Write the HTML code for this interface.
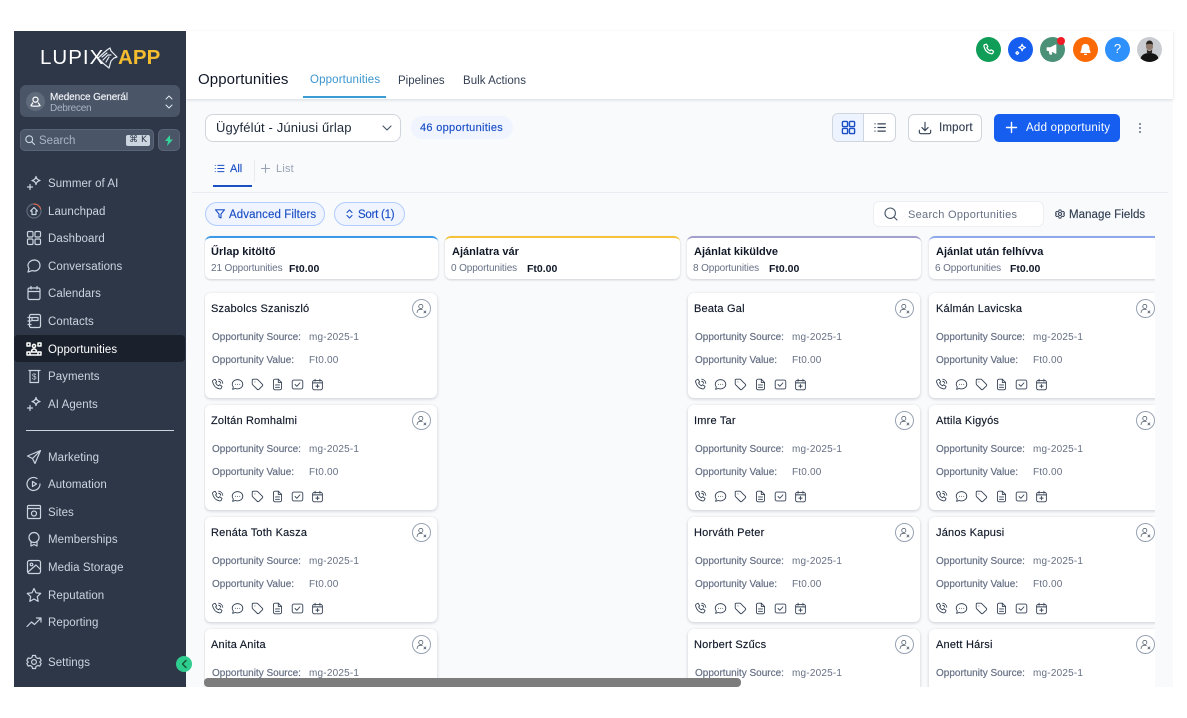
<!DOCTYPE html>
<html lang="hu">
<head>
<meta charset="utf-8">
<title>Opportunities</title>
<style>
html,body{margin:0;padding:0;background:#fff;width:1187px;height:718px;overflow:hidden}
body{position:relative;font-family:"Liberation Sans",sans-serif;color:#101828}
.a{position:absolute}
.t{position:absolute;white-space:nowrap;line-height:14px}
svg{position:absolute;fill:none;stroke:currentColor;stroke-width:1.5;stroke-linecap:round;stroke-linejoin:round;overflow:visible}
#side{left:14px;top:31px;width:172px;height:656px;background:#2d3748}
#main{left:186px;top:31px;width:987px;height:656px;background:#f8fafc}
#head{left:186px;top:31px;width:987px;height:68px;background:#fff;box-shadow:0 1px 3px rgba(16,24,40,.14)}
.n{left:48px;font-size:11.5px;letter-spacing:.06px;color:#cbd5e0}
.ni{color:#cbd5e0;width:16px;height:16px;left:26px;stroke-width:1.2}
.c{position:absolute;width:25px;height:25px;border-radius:50%;top:37px}
.c svg{left:6px;top:6px;width:13px;height:13px;color:#fff}
#board{left:0;top:0;width:1155px;height:687px;clip-path:inset(230px 0 0 204px)}
.h{position:absolute;top:236px;height:43px;background:#fff;border-radius:6px;box-shadow:0 1px 2px rgba(16,24,40,.18);border-top:2px solid #3b9be8;box-sizing:border-box}
.h b{position:absolute;left:7px;top:7px;font-size:11px;line-height:14px;white-space:nowrap;letter-spacing:.02px;color:#101828}
.h span{position:absolute;left:6px;top:24px;font-size:10px;line-height:14px;color:#667085;white-space:nowrap;letter-spacing:-.12px}
.h i{position:absolute;top:24px;font-style:normal;font-size:10.5px;line-height:14px;font-weight:bold;color:#101828;white-space:nowrap}
.k{position:absolute;width:232px;height:105px;background:#fff;border-radius:6px;box-shadow:0 1px 3px rgba(16,24,40,.2);box-sizing:border-box}
.k .m{position:absolute;left:6px;top:9px;font-size:11px;line-height:14px;color:#101828;white-space:nowrap;letter-spacing:.2px;-webkit-text-stroke:.15px #101828}
.c4 .m{left:7px!important}
.k .l{position:absolute;left:7px;font-size:10px;line-height:14px;color:#667085;white-space:nowrap;letter-spacing:0;-webkit-text-stroke:.2px #667085}
.k .v{position:absolute;left:104px;font-size:10px;line-height:14px;color:#667085;white-space:nowrap;letter-spacing:.2px}
.k .s{top:38px}.k .u{top:61px}
.k .b{position:absolute;left:207px;top:6px;width:17px;height:17px;border:1px solid #98a2b3;border-radius:50%;color:#475467}
.k .b svg{left:3px;top:3px;width:11px;height:11px;stroke-width:1.1}
.k>svg{top:85px;width:13px;height:13px;color:#344054;stroke-width:1.1}
.i1{left:6px}.i2{left:26px}.i3{left:46px}.i4{left:66px}.i5{left:86px}.i6{left:106px}
</style>
</head>
<body>
<svg width="0" height="0" style="position:absolute">
<symbol id="ph" viewBox="0 0 16 16"><path d="M3 2.500l2-1 2 3.200-1.300 1.300c.7 1.600 2 3 3.600 3.600l1.300-1.300 3 2-1 2.200c-.3.700-1 1-1.800.9C6 12.700 2.800 9 1.900 4.200c-.1-.7.400-1.300 1.100-1.700z"/><path d="M9.500 1.500c2.700.3 4.700 2.300 5 5M9.500 4c1.300.2 2.300 1.200 2.500 2.500"/></symbol>
<symbol id="ch" viewBox="0 0 16 16"><path d="M8 2c3.600 0 6.500 2.500 6.500 5.700s-2.900 5.700-6.500 5.700c-.9 0-1.800-.2-2.600-.5L2 14l.8-3C2 10 1.500 8.900 1.500 7.700 1.500 4.500 4.400 2 8 2z"/><path d="M5.300 7.800h.1M8 7.800h.1M10.700 7.800h.1"/></symbol>
<symbol id="tg" viewBox="0 0 16 16"><path d="M1.500 3v4.200c0 .4.200.7.400 1l5.800 5.800c.6.600 1.500.6 2 0l4.300-4.300c.6-.6.600-1.500 0-2L8.200 1.900c-.3-.3-.6-.4-1-.4H3c-.9 0-1.500.6-1.500 1.500z"/><path d="M4.800 4.800h.1"/></symbol>
<symbol id="dc" viewBox="0 0 16 16"><path d="M9 1.500H5c-1.100 0-2 .9-2 2v9c0 1.100.9 2 2 2h6c1.100 0 2-.9 2-2V5.500z"/><path d="M9 1.500v4h4M5.500 8.500h5M5.500 11.500h5"/></symbol>
<symbol id="ck" viewBox="0 0 16 16"><rect x="1.500" y="2.500" width="13" height="11" rx="2"/><path d="M5 8l2.200 2.200L11 6"/></symbol>
<symbol id="cp" viewBox="0 0 16 16"><rect x="2" y="3" width="12" height="11.500" rx="2"/><path d="M2 6h12M5 1.500V4M11 1.500V4"/><path d="M8 8v4M6 10h4"/></symbol>
<symbol id="us" viewBox="0 0 16 16"><circle cx="7" cy="5" r="3"/><path d="M1.500 14c0-3 2.400-5 5.500-5 .8 0 1.500.1 2.200.4"/><path d="M11.500 11.500l3 3M14.500 11.500l-3 3"/></symbol>
<symbol id="gr" viewBox="0 0 16 16"><rect x="1.500" y="1.500" width="5.500" height="5.500" rx="1.200"/><rect x="9" y="1.500" width="5.500" height="5.500" rx="1.200"/><rect x="1.500" y="9" width="5.500" height="5.500" rx="1.200"/><rect x="9" y="9" width="5.500" height="5.500" rx="1.200"/></symbol>
<symbol id="li" viewBox="0 0 16 16"><path d="M5.500 3.500H14.500M5.500 8H14.500M5.500 12.500H14.500M1.800 3.500h.1M1.800 8h.1M1.800 12.500h.1"/></symbol>
<symbol id="sp" viewBox="0 0 16 16"><path d="M10 1.500c.4 2.400 1.500 3.500 4 4-2.500.5-3.600 1.600-4 4-.4-2.400-1.500-3.500-4-4 2.500-.5 3.600-1.600 4-4z"/><path d="M4 9.500v5M1.500 12h5"/></symbol>
</svg>

<div class="a" id="main"></div>

<div id="board" class="a">
  <div class="h" style="left:205px;width:233px;border-top-color:#3b9be8"><b style="left:6px">Űrlap kitöltő</b><span>21 Opportunities</span><i style="left:84px">Ft0.00</i></div>
  <div class="h" style="left:445px;width:235px;border-top-color:#f5c33b"><b>Ajánlatra vár</b><span>0 Opportunities</span><i style="left:82px">Ft0.00</i></div>
  <div class="h" style="left:687px;width:234px;border-top-color:#a3a0d0"><b>Ajánlat kiküldve</b><span>8 Opportunities</span><i style="left:82px">Ft0.00</i></div>
  <div class="h" style="left:929px;width:234px;border-top-color:#8ea8ec"><b>Ajánlat után felhívva</b><span>6 Opportunities</span><i style="left:81px">Ft0.00</i></div>

  <div class="k" style="left:205px;top:293px"><div class="m">Szabolcs Szaniszló</div><div class="b"><svg><use href="#us"/></svg></div><div class="l s">Opportunity Source:</div><div class="v s">mg-2025-1</div><div class="l u">Opportunity Value:</div><div class="v u">Ft0.00</div><svg class="i1"><use href="#ph"/></svg><svg class="i2"><use href="#ch"/></svg><svg class="i3"><use href="#tg"/></svg><svg class="i4"><use href="#dc"/></svg><svg class="i5"><use href="#ck"/></svg><svg class="i6"><use href="#cp"/></svg></div>
  <div class="k" style="left:205px;top:405px"><div class="m">Zoltán Romhalmi</div><div class="b"><svg><use href="#us"/></svg></div><div class="l s">Opportunity Source:</div><div class="v s">mg-2025-1</div><div class="l u">Opportunity Value:</div><div class="v u">Ft0.00</div><svg class="i1"><use href="#ph"/></svg><svg class="i2"><use href="#ch"/></svg><svg class="i3"><use href="#tg"/></svg><svg class="i4"><use href="#dc"/></svg><svg class="i5"><use href="#ck"/></svg><svg class="i6"><use href="#cp"/></svg></div>
  <div class="k" style="left:205px;top:517px"><div class="m">Renáta Toth Kasza</div><div class="b"><svg><use href="#us"/></svg></div><div class="l s">Opportunity Source:</div><div class="v s">mg-2025-1</div><div class="l u">Opportunity Value:</div><div class="v u">Ft0.00</div><svg class="i1"><use href="#ph"/></svg><svg class="i2"><use href="#ch"/></svg><svg class="i3"><use href="#tg"/></svg><svg class="i4"><use href="#dc"/></svg><svg class="i5"><use href="#ck"/></svg><svg class="i6"><use href="#cp"/></svg></div>
  <div class="k" style="left:205px;top:629px"><div class="m">Anita Anita</div><div class="b"><svg><use href="#us"/></svg></div><div class="l s">Opportunity Source:</div><div class="v s">mg-2025-1</div></div>

  <div class="k" style="left:688px;top:293px"><div class="m">Beata Gal</div><div class="b"><svg><use href="#us"/></svg></div><div class="l s">Opportunity Source:</div><div class="v s">mg-2025-1</div><div class="l u">Opportunity Value:</div><div class="v u">Ft0.00</div><svg class="i1"><use href="#ph"/></svg><svg class="i2"><use href="#ch"/></svg><svg class="i3"><use href="#tg"/></svg><svg class="i4"><use href="#dc"/></svg><svg class="i5"><use href="#ck"/></svg><svg class="i6"><use href="#cp"/></svg></div>
  <div class="k" style="left:688px;top:405px"><div class="m">Imre Tar</div><div class="b"><svg><use href="#us"/></svg></div><div class="l s">Opportunity Source:</div><div class="v s">mg-2025-1</div><div class="l u">Opportunity Value:</div><div class="v u">Ft0.00</div><svg class="i1"><use href="#ph"/></svg><svg class="i2"><use href="#ch"/></svg><svg class="i3"><use href="#tg"/></svg><svg class="i4"><use href="#dc"/></svg><svg class="i5"><use href="#ck"/></svg><svg class="i6"><use href="#cp"/></svg></div>
  <div class="k" style="left:688px;top:517px"><div class="m">Horváth Peter</div><div class="b"><svg><use href="#us"/></svg></div><div class="l s">Opportunity Source:</div><div class="v s">mg-2025-1</div><div class="l u">Opportunity Value:</div><div class="v u">Ft0.00</div><svg class="i1"><use href="#ph"/></svg><svg class="i2"><use href="#ch"/></svg><svg class="i3"><use href="#tg"/></svg><svg class="i4"><use href="#dc"/></svg><svg class="i5"><use href="#ck"/></svg><svg class="i6"><use href="#cp"/></svg></div>
  <div class="k" style="left:688px;top:629px"><div class="m">Norbert Szűcs</div><div class="b"><svg><use href="#us"/></svg></div><div class="l s">Opportunity Source:</div><div class="v s">mg-2025-1</div></div>

  <div class="k c4" style="left:929px;top:293px"><div class="m">Kálmán Lavicska</div><div class="b"><svg><use href="#us"/></svg></div><div class="l s">Opportunity Source:</div><div class="v s">mg-2025-1</div><div class="l u">Opportunity Value:</div><div class="v u">Ft0.00</div><svg class="i1"><use href="#ph"/></svg><svg class="i2"><use href="#ch"/></svg><svg class="i3"><use href="#tg"/></svg><svg class="i4"><use href="#dc"/></svg><svg class="i5"><use href="#ck"/></svg><svg class="i6"><use href="#cp"/></svg></div>
  <div class="k c4" style="left:929px;top:405px"><div class="m">Attila Kigyós</div><div class="b"><svg><use href="#us"/></svg></div><div class="l s">Opportunity Source:</div><div class="v s">mg-2025-1</div><div class="l u">Opportunity Value:</div><div class="v u">Ft0.00</div><svg class="i1"><use href="#ph"/></svg><svg class="i2"><use href="#ch"/></svg><svg class="i3"><use href="#tg"/></svg><svg class="i4"><use href="#dc"/></svg><svg class="i5"><use href="#ck"/></svg><svg class="i6"><use href="#cp"/></svg></div>
  <div class="k c4" style="left:929px;top:517px"><div class="m">János Kapusi</div><div class="b"><svg><use href="#us"/></svg></div><div class="l s">Opportunity Source:</div><div class="v s">mg-2025-1</div><div class="l u">Opportunity Value:</div><div class="v u">Ft0.00</div><svg class="i1"><use href="#ph"/></svg><svg class="i2"><use href="#ch"/></svg><svg class="i3"><use href="#tg"/></svg><svg class="i4"><use href="#dc"/></svg><svg class="i5"><use href="#ck"/></svg><svg class="i6"><use href="#cp"/></svg></div>
  <div class="k c4" style="left:929px;top:629px"><div class="m">Anett Hársi</div><div class="b"><svg><use href="#us"/></svg></div><div class="l s">Opportunity Source:</div><div class="v s">mg-2025-1</div></div>
</div>

<div class="a" style="left:204px;top:678px;width:537px;height:9px;background:#7d7d7d;border-radius:4px"></div>

<!-- header -->
<div class="a" id="head"></div>
<div class="t" style="left:198px;top:73px;font-size:15px;letter-spacing:.1px;color:#101828">Opportunities</div>
<div class="t" style="left:310px;top:73px;font-size:11.5px;letter-spacing:.14px;color:#3b95cf">Opportunities</div>
<div class="a" style="left:303px;top:96px;width:83px;height:1.5px;background:#3b9bd3"></div>
<div class="t" style="left:398px;top:74px;font-size:11.5px;letter-spacing:0;color:#344054">Pipelines</div>
<div class="t" style="left:463px;top:74px;font-size:11.5px;letter-spacing:.03px;color:#344054">Bulk Actions</div>

<div class="c" style="left:976px;background:#0f9d58"><svg viewBox="0 0 16 16"><path d="M3.500 2l2-.5 1.800 3-1.300 1.300c.8 1.700 2.100 3 3.800 3.800l1.300-1.300 3 1.800-.5 2c-.3.800-1 1.200-1.800 1.100C7 12.500 3.500 9 2.400 3.800c-.1-.8.300-1.500 1.100-1.800z"/></svg></div>
<div class="c" style="left:1008px;background:#155eef"><svg viewBox="0 0 16 16"><path d="M10 1.500c.4 2.400 1.500 3.500 4 4-2.500.5-3.600 1.600-4 4-.4-2.400-1.500-3.500-4-4 2.500-.5 3.600-1.600 4-4z"/><path d="M4 10.500l1.800 1.800L4 14.100l-1.800-1.800z"/></svg></div>
<div class="c" style="left:1040px;background:#4a9177"><svg viewBox="0 0 16 16" style="fill:#fff"><path d="M1.500 6h4L12 2.500v10L5.500 9h-4zM4 9.500l1 4h1.800L6 9.500"/></svg></div>
<div class="a" style="left:1057px;top:37px;width:8px;height:8px;border-radius:50%;background:#f01b24"></div>
<div class="c" style="left:1073px;background:#fb6a06"><svg viewBox="0 0 16 16" style="fill:#fff;stroke:#fff"><path d="M8 1.800c2.400 0 4 1.800 4 4.200 0 2.800 1.500 4.500 1.500 5.500h-11c0-1 1.500-2.700 1.500-5.500 0-2.400 1.600-4.200 4-4.200z"/><path d="M6.800 14h2.400"/></svg></div>
<div class="c" style="left:1105px;background:#2e90fa"><span class="t" style="left:0;width:25px;text-align:center;top:5px;color:#fff;font-size:13px">?</span></div>
<div class="c" style="left:1137px;background:#c9ccd1;overflow:hidden"><svg viewBox="0 0 25 25" style="left:0;top:0;width:25px;height:25px;stroke:none;fill:#141414"><path d="M3 25c0-6 3-9 9.500-9S22 19 22 25z"/><circle cx="12.500" cy="9.500" r="3.600" fill="#8f7a6c"/><path d="M9 8c0-3 1.500-4.500 3.500-4.500S16 5 16 8c-1-1.500-6-1.500-7 0z" fill="#2c2622"/><path d="M9.800 12c1 2.500 4.400 2.500 5.400 0l-.2 4h-5z" fill="#2c2622"/></svg></div>

<!-- toolbar -->
<div class="a" style="left:205px;top:114px;width:196px;height:28px;box-sizing:border-box;background:#fff;border:1px solid #d0d5dd;border-radius:8px"></div>
<div class="t" style="left:216px;top:121px;font-size:13px;letter-spacing:.14px;color:#1d2939">Ügyfélút - Júniusi űrlap</div>
<svg style="left:382px;top:124px;width:10px;height:8px;color:#475467;stroke-width:1.1" viewBox="0 0 10 8"><path d="M1 2l4 4 4-4"/></svg>
<div class="a" style="left:411px;top:116px;width:102px;height:23px;border-radius:12px;background:#eff4ff"></div>
<div class="t" style="left:420px;top:121px;font-size:11px;letter-spacing:.3px;color:#1a4fc4;-webkit-text-stroke:.15px #1a4fc4">46 opportunities</div>

<div class="a" style="left:832px;top:113px;width:64px;height:29px;box-sizing:border-box;background:#fff;border:1px solid #d0d5dd;border-radius:6px;overflow:hidden"><div class="a" style="left:0;top:0;width:30px;height:27px;background:#eef4ff;border-right:1px solid #d0d5dd"></div></div>
<svg style="left:840.5px;top:120px;width:15px;height:15px;color:#1a4fc4;stroke-width:1.5"><use href="#gr"/></svg>
<svg style="left:873px;top:121px;width:14px;height:13px;color:#344054;stroke-width:1.5"><use href="#li"/></svg>
<div class="a" style="left:908px;top:114px;width:74px;height:28px;box-sizing:border-box;background:#fff;border:1px solid #d0d5dd;border-radius:6px"></div>
<svg style="left:918px;top:121px;width:14px;height:14px;color:#344054;stroke-width:1.3" viewBox="0 0 16 16"><path d="M8 1.500v9M4.500 7.500L8 11l3.500-3.500M1.500 10.500v2c0 1.100.9 2 2 2h9c1.100 0 2-.9 2-2v-2"/></svg>
<div class="t" style="left:939px;top:121px;font-size:11.5px;letter-spacing:.2px;color:#344054;-webkit-text-stroke:.15px #344054">Import</div>
<div class="a" style="left:994px;top:114px;width:126px;height:28px;background:#155eef;border-radius:5px"></div>
<svg style="left:1006px;top:122px;width:11px;height:11px;color:#fff;stroke-width:1.4" viewBox="0 0 11 11"><path d="M5.500 .5v10M.5 5.500h10"/></svg>
<div class="t" style="left:1026px;top:121px;font-size:11.5px;letter-spacing:.25px;color:#fff">Add opportunity</div>
<div class="a" style="left:1139px;top:123px;width:2px;height:2px;border-radius:50%;background:#667085;box-shadow:0 4px 0 #667085,0 8px 0 #667085"></div>

<div class="a" style="left:192px;top:192px;width:976px;height:1px;background:#e9ecf0"></div>
<svg style="left:214px;top:163px;width:11px;height:11px;color:#1a4fc4;stroke-width:1.5"><use href="#li"/></svg>
<div class="t" style="left:230px;top:162px;font-size:11px;color:#1a4fc4;-webkit-text-stroke:.15px #1a4fc4">All</div>
<div class="a" style="left:213px;top:185px;width:39px;height:2px;background:#1a4fc4"></div>
<div class="a" style="left:254px;top:160px;width:1px;height:22px;background:#eaecf0"></div>
<svg style="left:261px;top:164px;width:9px;height:9px;color:#98a2b3;stroke-width:1.1" viewBox="0 0 9 9"><path d="M4.500 .5v8M.5 4.500h8"/></svg>
<div class="t" style="left:276px;top:162px;font-size:11px;letter-spacing:.2px;color:#98a2b3">List</div>

<div class="a" style="left:205px;top:202px;width:120px;height:24px;box-sizing:border-box;background:#eff4ff;border:1px solid #b2ccff;border-radius:12px"></div>
<svg style="left:215px;top:209px;width:10px;height:10px;color:#1a4fc4;stroke-width:1.1" viewBox="0 0 10 10"><path d="M.5 .8h9L6 5v4L4 8V5z"/></svg>
<div class="t" style="left:229px;top:208px;font-size:11.5px;letter-spacing:.1px;color:#1a4fc4;-webkit-text-stroke:.15px #1a4fc4">Advanced Filters</div>
<div class="a" style="left:334px;top:202px;width:71px;height:24px;box-sizing:border-box;background:#eff4ff;border:1px solid #b2ccff;border-radius:12px"></div>
<svg style="left:346px;top:209px;width:7px;height:10px;color:#1a4fc4;stroke-width:1.1" viewBox="0 0 7 10"><path d="M1 3.500L3.500 1 6 3.500M1 6.500L3.500 9 6 6.500"/></svg>
<div class="t" style="left:358px;top:208px;font-size:11.5px;letter-spacing:-.25px;color:#1a4fc4;-webkit-text-stroke:.15px #1a4fc4">Sort (1)</div>

<div class="a" style="left:873px;top:201px;width:171px;height:26px;box-sizing:border-box;background:#fff;border:1px solid #eceef2;border-radius:6px"></div>
<svg style="left:884px;top:207px;width:14px;height:14px;color:#475467;stroke-width:1.1" viewBox="0 0 14 14"><circle cx="6.200" cy="6.200" r="5.200"/><path d="M10 10l3 3"/></svg>
<div class="t" style="left:908px;top:207.5px;font-size:11px;letter-spacing:.3px;color:#667085">Search Opportunities</div>
<svg style="left:1055px;top:209px;width:10px;height:10px;color:#344054;stroke-width:1.6" viewBox="0 0 16 16"><circle cx="8" cy="8" r="2.400"/><path d="M6.500 1.500h3l.5 2 1.800 1 2-.6 1.400 2.600-1.500 1.500 1.500 1.500-1.400 2.600-2-.6-1.800 1-.5 2h-3l-.5-2-1.800-1-2 .6L.8 9.500 2.300 8 .8 6.500l1.400-2.600 2 .6 1.800-1z"/></svg>
<div class="t" style="left:1069px;top:207.5px;font-size:11.5px;letter-spacing:.06px;color:#344054;-webkit-text-stroke:.15px #344054">Manage Fields</div>

<!-- sidebar -->
<div class="a" id="side"></div>
<div class="t" style="left:40px;top:47px;font-size:20.5px;line-height:22px;letter-spacing:1px;color:#fff">LUPIX</div>
<svg style="left:97px;top:47px;width:21px;height:22px;color:#e8edf2;stroke-width:1.2" viewBox="0 0 21 22"><path d="M1 11L10 3l3-2 1 3 6 6-3 1-3 3-2 7-5-4z"/><path d="M5 10l5-4M6 13l5-5 3 0M9 15l3-5"/></svg>
<div class="t" style="left:118px;top:47px;font-size:20.5px;line-height:22px;font-weight:bold;letter-spacing:.1px;color:#f4bd2f">APP</div>

<div class="a" style="left:20px;top:85px;width:160px;height:32px;border-radius:6px;background:#4a5568"></div>
<div class="a" style="left:26px;top:92px;width:19px;height:19px;border-radius:50%;background:#5f6a7b"></div>
<svg style="left:30px;top:96px;width:11px;height:11px;color:#fff;stroke-width:1.3" viewBox="0 0 12 12"><circle cx="6" cy="4" r="2.800"/><path d="M3 7.500L1 10.500c1 .8 9 .8 10 0L9 7.500"/></svg>
<div class="t" style="left:50px;top:91px;font-size:10px;letter-spacing:-.1px;color:#f2f4f7;-webkit-text-stroke:.15px #f2f4f7">Medence Generál</div>
<div class="t" style="left:50px;top:102px;font-size:10px;letter-spacing:-.25px;color:#a9b4c2">Debrecen</div>
<svg style="left:165px;top:95px;width:8px;height:14px;color:#e2e8f0;stroke-width:1" viewBox="0 0 8 14"><path d="M1 4l3-3 3 3M1 10l3 3 3-3"/></svg>

<div class="a" style="left:20px;top:129px;width:134px;height:22px;box-sizing:border-box;border-radius:5px;background:#4a5568;border:1px solid #5a6577"></div>
<svg style="left:25px;top:135px;width:10px;height:10px;color:#cbd5e0;stroke-width:1.1" viewBox="0 0 10 10"><circle cx="4.200" cy="4.200" r="3.400"/><path d="M6.800 6.800L9.500 9.500"/></svg>
<div class="t" style="left:39px;top:134px;font-size:11.5px;letter-spacing:0;color:#a9b4c2">Search</div>
<div class="a" style="left:126px;top:135px;width:24px;height:11px;border-radius:2px;background:#cbd5e0"></div>
<div class="t" style="left:126px;top:134px;width:24px;text-align:center;font-family:'DejaVu Sans','Liberation Sans',sans-serif;font-size:9px;line-height:13px;color:#2d3748">⌘ K</div>
<div class="a" style="left:158px;top:129px;width:22px;height:22px;box-sizing:border-box;border-radius:5px;background:#4a5568;border:1px solid #5a6577"></div>
<svg style="left:164px;top:135px;width:10px;height:11px;stroke:none;fill:#34d399" viewBox="0 0 10 11"><path d="M6 0L1 6h3l-1 5 6-6.500H6z"/></svg>

<div class="a" style="left:14px;top:335px;width:171px;height:27px;border-radius:4px;background:#1a202c"></div>

<svg class="ni" style="top:175px"><use href="#sp"/></svg><div class="t n" style="top:177px">Summer of AI</div>
<svg class="ni" style="top:203px" viewBox="0 0 16 16"><circle cx="8" cy="8" r="7" stroke="#5f6a7b"/><path d="M8 1a7 7 0 0 1 6.500 4.500" stroke="#e0654a"/><path d="M8 4.500L11.500 8H10v3.500H6V8H4.500z"/></svg><div class="t n" style="top:205px">Launchpad</div>
<svg class="ni" style="top:230px"><use href="#gr"/></svg><div class="t n" style="top:232px">Dashboard</div>
<svg class="ni" style="top:258px" viewBox="0 0 16 16"><path d="M8.500 2c3.300 0 5.500 2.400 5.500 5.500S11.500 13 8.500 13c-.8 0-1.500-.1-2.200-.4L2 14l1-3.500C2.400 9.600 2 8.600 2 7.500 2 4.400 5 2 8.500 2z"/></svg><div class="t n" style="top:260px">Conversations</div>
<svg class="ni" style="top:285px" viewBox="0 0 16 16"><rect x="2" y="3" width="12" height="11.500" rx="1.500"/><path d="M2 6.500h12M5 1.500V4M11 1.500V4"/></svg><div class="t n" style="top:287px">Calendars</div>
<svg class="ni" style="top:313px" viewBox="0 0 16 16"><rect x="3.500" y="1.500" width="11" height="13" rx="1.500"/><path d="M6 4.500h6v3H6zM2 4.500h3M2 8h3M2 11.500h3"/></svg><div class="t n" style="top:315px">Contacts</div>
<svg class="ni" style="top:341px;color:#fff;stroke-width:1.5" viewBox="0 0 16 16"><circle cx="8" cy="5" r="1.600"/><path d="M5.500 11c0-2 1-3 2.500-3s2.500 1 2.500 3zM1 2h3v3H1zM12 2h3v3h-3zM1 11h3v3H1zM12 11h3v3h-3zM5 14h6"/></svg><div class="t n" style="top:343px;color:#fff">Opportunities</div>
<svg class="ni" style="top:368px" viewBox="0 0 16 16"><path d="M3 2.500h11M4 2.500v12h8.500v-12"/><text x="8.200" y="11.500" font-family="Liberation Sans,sans-serif" font-size="8" text-anchor="middle" fill="currentColor" stroke="none">$</text></svg><div class="t n" style="top:370px">Payments</div>
<svg class="ni" style="top:396px"><use href="#sp"/></svg><div class="t n" style="top:398px">AI Agents</div>

<div class="a" style="left:26px;top:430px;width:148px;height:1px;background:#cbd5e0"></div>

<svg class="ni" style="top:449px" viewBox="0 0 16 16"><path d="M14.500 1.500L1.500 7l5 2.500 2.500 5zM6.500 9.500l8-8"/></svg><div class="t n" style="top:451px">Marketing</div>
<svg class="ni" style="top:476px" viewBox="0 0 16 16"><path d="M14 8a6.500 6.500 0 1 1-3-5.500"/><path d="M6.500 5.500L10.500 8l-4 2.500z"/></svg><div class="t n" style="top:478px">Automation</div>
<svg class="ni" style="top:504px" viewBox="0 0 16 16"><rect x="1.500" y="1.500" width="13" height="13" rx="1"/><path d="M1.500 4.500h13"/><circle cx="8" cy="9.500" r="2.500"/></svg><div class="t n" style="top:506px">Sites</div>
<svg class="ni" style="top:531px" viewBox="0 0 16 16"><circle cx="8" cy="6.500" r="5"/><path d="M5 10.500V15l3-1.500L11 15v-4.500"/></svg><div class="t n" style="top:533px">Memberships</div>
<svg class="ni" style="top:559px" viewBox="0 0 16 16"><rect x="1.500" y="1.500" width="13" height="13" rx="2"/><circle cx="5.500" cy="5.500" r="1.300"/><path d="M2 13L10 6l4.500 4.500"/></svg><div class="t n" style="top:561px">Media Storage</div>
<svg class="ni" style="top:587px" viewBox="0 0 16 16"><path d="M8 1.500l2 4.300 4.700.6-3.400 3.200.9 4.700L8 12l-4.200 2.300.9-4.700L1.300 6.400 6 5.800z"/></svg><div class="t n" style="top:589px">Reputation</div>
<svg class="ni" style="top:614px" viewBox="0 0 16 16"><path d="M1 12.500l4.500-4.500 3 2.500L15 4M10.500 4H15v4"/></svg><div class="t n" style="top:616px">Reporting</div>
<svg class="ni" style="top:654px" viewBox="0 0 16 16"><circle cx="8" cy="8" r="2.400"/><path d="M6.500 1.500h3l.5 2 1.800 1 2-.6 1.400 2.600-1.500 1.500 1.500 1.500-1.400 2.600-2-.6-1.800 1-.5 2h-3l-.5-2-1.800-1-2 .6L.8 9.500 2.300 8 .8 6.500l1.400-2.600 2 .6 1.800-1z"/></svg><div class="t n" style="top:656px">Settings</div>

<div class="a" style="left:176px;top:656px;width:16px;height:16px;border-radius:50%;background:#2ecc8f"></div>
<svg style="left:181px;top:660px;width:6px;height:8px;color:#14532d;stroke-width:1.4" viewBox="0 0 6 8"><path d="M5 .5L1.500 4 5 7.500"/></svg>
</body>
</html>
